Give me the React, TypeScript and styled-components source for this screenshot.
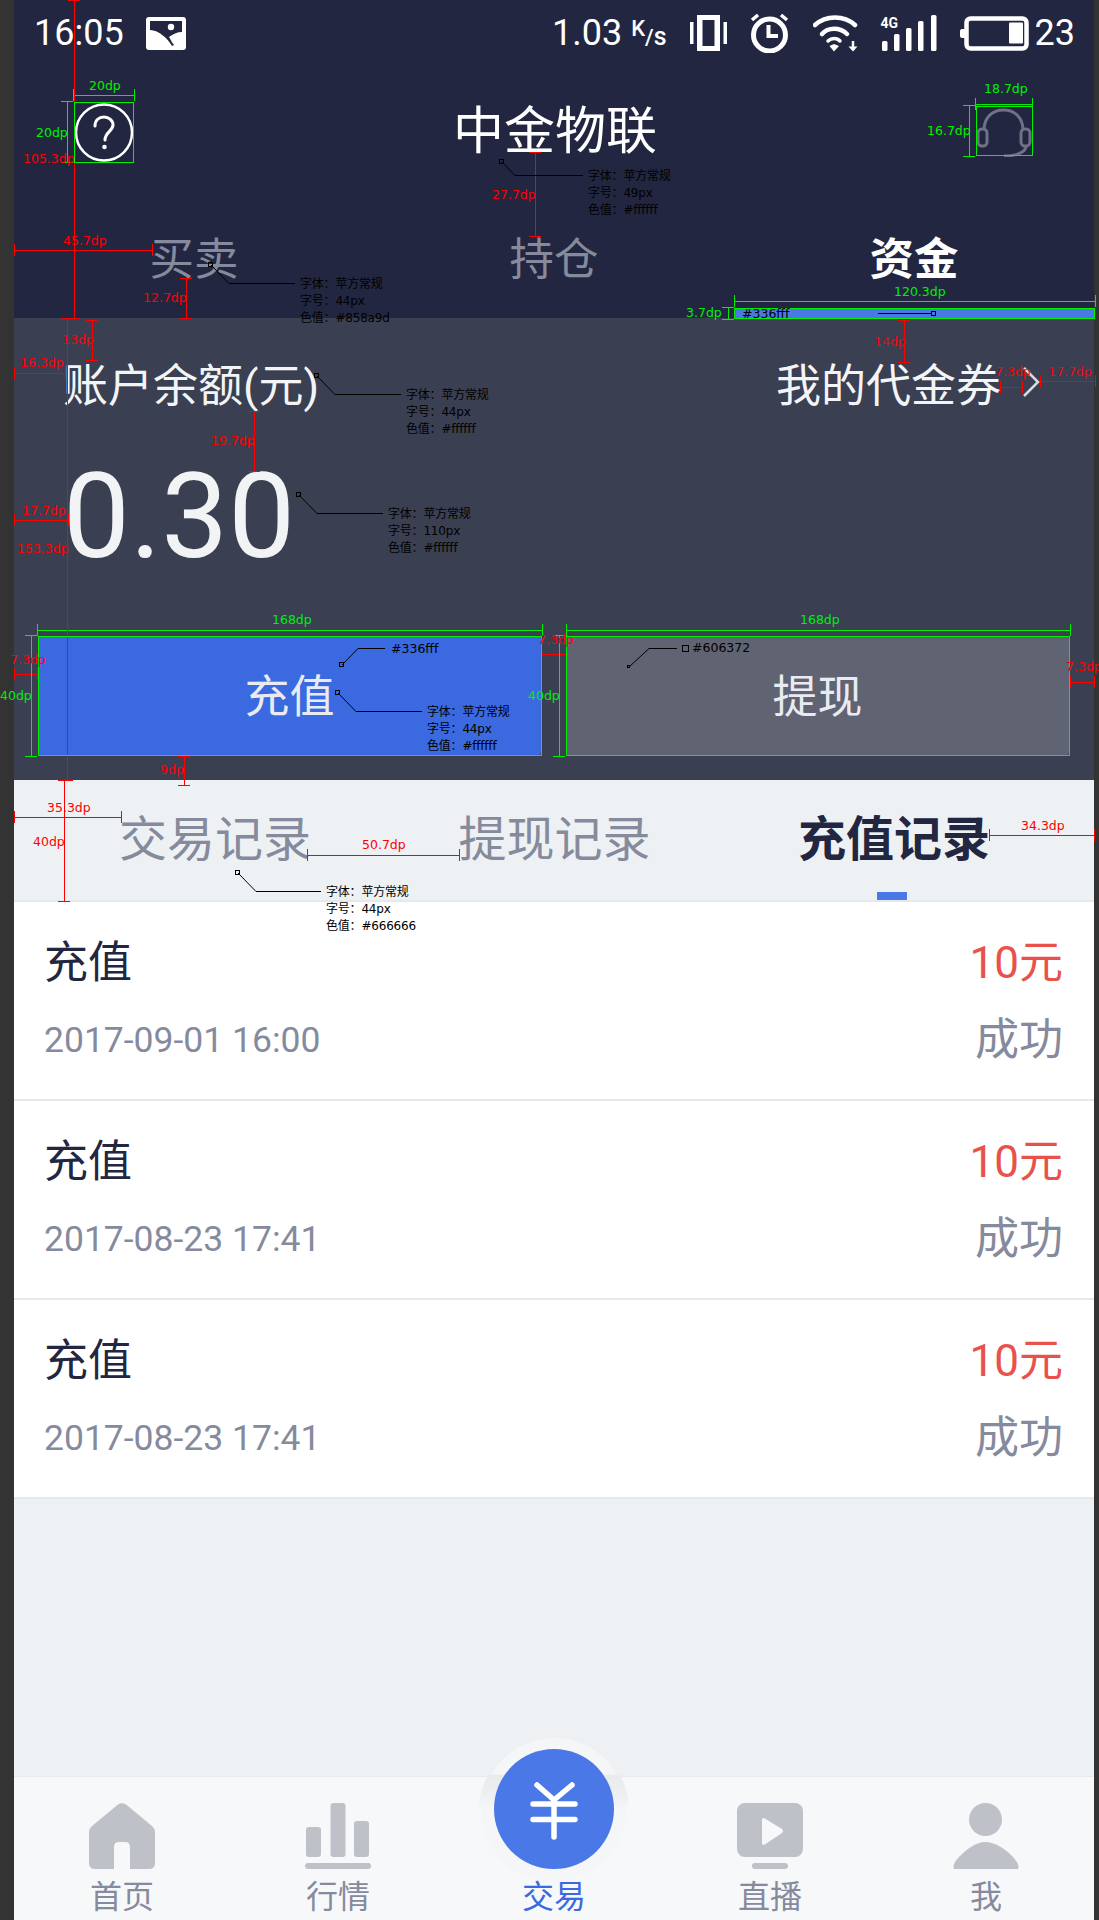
import React from "react";
import styled, { createGlobalStyle } from "styled-components";

const SANS = `Roboto, "Noto Sans CJK SC", sans-serif`;

const GlobalStyle = createGlobalStyle`
  html, body { margin: 0; padding: 0; background: #333333; }
  * { box-sizing: border-box; }
`;

const Page = styled.div`
  position: relative;
  width: 1099px;
  height: 1920px;
  padding: 0 5px 0 14px;
  background: #333333;
  overflow: hidden;
  font-family: ${SANS};
`;

const Screen = styled.div`
  display: flex;
  flex-direction: column;
  height: 1920px;
  background: #eef1f3;
`;

const Header = styled.header`
  display: flex;
  flex-direction: column;
  height: 318px;
  background: #222640;
  color: #ffffff;
`;

const StatusBar = styled.div`
  display: flex;
  align-items: center;
  justify-content: space-between;
  height: 66px;
  padding: 0 19px 0 20px;
  font-size: 36px;
`;

const StatusGroup = styled.div`
  display: flex;
  align-items: center;
  gap: ${(p: { $gap: number }) => p.$gap}px;
`;

const Speed = styled.span`
  display: flex;
  align-items: baseline;
`;

const SpeedUnit = styled.span`
  margin-left: 9px;
  font-size: 22px;
  font-weight: 500;
  white-space: nowrap;
`;

const SpeedK = styled.span`
  vertical-align: 9px;
`;

const SpeedS = styled.span`
  font-size: 25px;
`;

const TitleBar = styled.div`
  display: flex;
  align-items: center;
  justify-content: space-between;
  height: 132px;
  padding: 0 62px 0 60px;
`;

const Title = styled.h1`
  margin: 0;
  font-size: 51px;
  font-weight: 400;
  line-height: 60px;
`;

const TopTabs = styled.nav`
  display: grid;
  grid-template-columns: repeat(3, 1fr);
  height: 120px;
`;

const TopTab = styled.div<{ $active?: boolean }>`
  position: relative;
  padding-top: 36px;
  text-align: center;
  font-size: 44.5px;
  line-height: 52px;
  font-weight: ${(p) => (p.$active ? 700 : 400)};
  color: ${(p) => (p.$active ? "#ffffff" : "#858a9d")};
`;

const TopTabBar = styled.i`
  position: absolute;
  left: 0;
  right: 0;
  bottom: 0;
  height: 10px;
  background: #4a78e6;
`;

const Panel = styled.section`
  height: 462px;
  padding: 34px 25px 25px 24px;
  background: #3a3f52;
  color: #f3f4f6;
`;

const BalanceRow = styled.div`
  display: flex;
  align-items: center;
  justify-content: space-between;
  height: 60px;
  padding: 0 29px 0 25px;
  font-size: 45px;
`;

const VoucherLink = styled.div`
  display: flex;
  align-items: center;
  gap: 21px;
`;

const Amount = styled.div`
  margin: 45px 0 0 25px;
  font-size: 119px;
  line-height: 120px;
  color: #f1f3f5;
`;

const Actions = styled.div`
  display: grid;
  grid-template-columns: 1fr 1fr;
  gap: 25px;
  margin-top: 59px;
`;

const ActionButton = styled.div<{ $tone: string }>`
  display: flex;
  align-items: center;
  justify-content: center;
  height: 119px;
  padding-bottom: 4px;
  border-radius: 3px;
  background: ${(p) => p.$tone};
  color: #e9ebf2;
  font-size: 45px;
`;

const RecordTabs = styled.nav`
  display: flex;
  align-items: flex-start;
  justify-content: space-between;
  height: 122px;
  padding: 32px 104px 0 105px;
  border-bottom: 2px solid #e6e8ea;
  font-size: 48px;
  line-height: 56px;
`;

const RecordTab = styled.div<{ $active?: boolean }>`
  position: relative;
  height: 88px;
  font-weight: ${(p) => (p.$active ? 700 : 400)};
  color: ${(p) => (p.$active ? "#222640" : "#858a9d")};
`;

const RecordTabMark = styled.i`
  position: absolute;
  left: 79px;
  bottom: 0;
  width: 30px;
  height: 8px;
  background: #4a78e6;
`;

const RecordRow = styled.div`
  display: flex;
  justify-content: space-between;
  height: 199px;
  padding: 23px 31px 0 30px;
  background: #ffffff;
  border-bottom: 2px solid #e6e8ea;
`;

const RecordCol = styled.div<{ $end?: boolean }>`
  display: flex;
  flex-direction: column;
  align-items: ${(p) => (p.$end ? "flex-end" : "flex-start")};
`;

const RecordLine = styled.div<{ $color: string; $size: number }>`
  height: 77px;
  line-height: 77px;
  font-size: ${(p) => p.$size}px;
  color: ${(p) => p.$color};
`;

const TabBar = styled.footer`
  position: relative;
  display: grid;
  grid-template-columns: repeat(5, 1fr);
  height: 144px;
  margin-top: auto;
  padding-top: 26px;
  background: #f6f8fa;
  border-top: 1px solid #e8eaec;
`;

const TabItem = styled.div<{ $active?: boolean }>`
  display: flex;
  flex-direction: column;
  align-items: center;
  font-size: 32px;
  line-height: 48px;
  color: ${(p) => (p.$active ? "#3a69e0" : "#858a9d")};
`;

const TabIcon = styled.div`
  height: 66px;
  margin-bottom: 4px;
`;

const TradeHalo = styled.div`
  position: absolute;
  left: 468px;
  top: -39px;
  width: 144px;
  height: 144px;
  border-radius: 50%;
  background: #f4f6f8;
  isolation: isolate;
  &::before {
    content: "";
    position: absolute;
    inset: -3px;
    z-index: -1;
    border-radius: 50%;
    background: linear-gradient(transparent 26%, #e9ebed 27%, #edeff1 40%, transparent 50%);
  }
`;

const TradeCircle = styled.div`
  position: absolute;
  left: 12px;
  top: 11px;
  width: 120px;
  height: 120px;
  border-radius: 50%;
  background: #4a78e6;
`;

/* design annotations drawn over the page */
const Overlay = styled.svg`
  position: absolute;
  left: 0;
  top: 0;
  pointer-events: none;
`;

const Note = styled.span<{ $x: number; $y: number; $color: string }>`
  position: absolute;
  left: ${(p) => p.$x}px;
  top: ${(p) => p.$y - 8}px;
  font: 12.5px/16px "DejaVu Sans", "Noto Sans CJK SC", sans-serif;
  color: ${(p) => p.$color};
  white-space: nowrap;
`;

const SpecNote = styled(Note)`
  font-size: 12px;
  letter-spacing: -0.2px;
`;

const RED = "#ff0000";
const GREEN = "#00f000";
const TICK = 6;

type Dim = [number, number, number];

const redH: Dim[] = [
  [14, 152, 250],
  [14, 65, 373],
  [14, 68, 520],
  [1000, 1022, 387],
  [1040, 1095, 381],
  [14, 37, 674],
  [541, 566, 654],
  [1070, 1094, 682],
  [14, 121, 817],
  [307, 459, 855],
  [989, 1094, 835],
];
const redV: Dim[] = [
  [74, 0, 318],
  [67, 318, 780],
  [186, 278, 318],
  [535, 152, 236],
  [92, 320, 360],
  [904, 320, 362],
  [254, 411, 471],
  [184, 756, 785],
  [64, 780, 901],
];
const greenH: Dim[] = [
  [73, 134, 95],
  [975, 1032, 104],
  [734, 1095, 301],
  [37, 542, 630],
  [566, 1070, 630],
];
const greenV: Dim[] = [
  [67, 101, 162],
  [969, 105, 156],
  [728, 307, 319],
  [31, 635, 756],
  [559, 635, 756],
];
const greenBoxes = [
  [74, 102, 59, 60],
  [976, 106, 56, 49],
  [734, 308, 360, 10],
  [38, 636, 503, 119],
  [566, 636, 503, 119],
];
const leaders = [
  [211, 265, 229, 283, 295],
  [502, 162, 515, 175, 583],
  [317, 376, 335, 394, 401],
  [299, 495, 317, 513, 383],
  [338, 693, 356, 711, 422],
  [342, 665, 358, 648, 385],
  [238, 873, 256, 891, 321],
];

const notes: [number, number, string, string][] = [
  [63, 241, RED, "45.7dp"],
  [23, 159, RED, "105.3dp"],
  [143, 298, RED, "12.7dp"],
  [492, 195, RED, "27.7dp"],
  [62, 340, RED, "13dp"],
  [874, 342, RED, "14dp"],
  [20, 363, RED, "16.3dp"],
  [22, 511, RED, "17.7dp"],
  [211, 441, RED, "19.7dp"],
  [17, 549, RED, "153.3dp"],
  [995, 372, RED, "7.3dp"],
  [1048, 372, RED, "17.7dp"],
  [10, 660, RED, "7.3dp"],
  [538, 640, RED, "7.3dp"],
  [1066, 667, RED, "7.3dp"],
  [160, 770, RED, "9dp"],
  [47, 808, RED, "35.3dp"],
  [33, 842, RED, "40dp"],
  [362, 845, RED, "50.7dp"],
  [1021, 826, RED, "34.3dp"],
  [89, 86, GREEN, "20dp"],
  [36, 133, GREEN, "20dp"],
  [984, 89, GREEN, "18.7dp"],
  [927, 131, GREEN, "16.7dp"],
  [894, 292, GREEN, "120.3dp"],
  [686, 313, GREEN, "3.7dp"],
  [272, 620, GREEN, "168dp"],
  [800, 620, GREEN, "168dp"],
  [0, 696, GREEN, "40dp"],
  [528, 696, GREEN, "40dp"],
  [742, 314, "#000000", "#336fff"],
  [391, 649, "#000000", "#336fff"],
  [692, 648, "#000000", "#606372"],
];

const specs: [number, number, string, string][] = [
  [300, 284, "44px", "#858a9d"],
  [588, 176, "49px", "#ffffff"],
  [406, 395, "44px", "#ffffff"],
  [388, 514, "110px", "#ffffff"],
  [427, 712, "44px", "#ffffff"],
  [326, 892, "44px", "#666666"],
];

const Annotations = () => (
  <>
    <Overlay width={1099} height={1920} fill="none" strokeWidth={1}>
      {[...redH.map((d) => [...d, RED]), ...greenH.map((d) => [...d, GREEN])].map(([a, b, y, c], i) => (
        <path
          key={`h${i}`}
          stroke={c as string}
          d={`M${a} ${+y + 0.5}H${b}M${+a + 0.5} ${+y - TICK}v${TICK * 2}M${+b + 0.5} ${+y - TICK}v${TICK * 2}`}
        />
      ))}
      {[...redV.map((d) => [...d, RED]), ...greenV.map((d) => [...d, GREEN])].map(([x, a, b, c], i) => (
        <path
          key={`v${i}`}
          stroke={c as string}
          d={`M${+x + 0.5} ${a}V${b}M${+x - TICK} ${+a + 0.5}h${TICK * 2}M${+x - TICK} ${+b + 0.5}h${TICK * 2}`}
        />
      ))}
      {greenBoxes.map(([x, y, w, h], i) => (
        <rect key={i} x={x + 0.5} y={y + 0.5} width={w} height={h} stroke={GREEN} />
      ))}
      {leaders.map(([x, y, mx, my, ex], i) => (
        <g key={i} stroke="#000000">
          <rect x={x - 2.5} y={y - 2.5} width={4} height={4} />
          <path d={`M${x} ${y}L${mx} ${my + 0.5}H${ex}`} />
        </g>
      ))}
      <g stroke="#000000">
        <path d="M878 313.5H931" />
        <rect x={931.5} y={311.5} width={4} height={4} />
        <path d="M629 667L649 648.5H677" />
        <rect x={627.5} y={665.5} width={2} height={2} />
        <rect x={682.5} y={645.5} width={6} height={6} />
      </g>
    </Overlay>
    {notes.map(([x, y, c, t], i) => (
      <Note key={i} $x={x} $y={y} $color={c}>
        {t}
      </Note>
    ))}
    {specs.map(([x, y, size, color], i) => (
      <React.Fragment key={i}>
        <SpecNote $x={x} $y={y} $color="#000000">字体：苹方常规</SpecNote>
        <SpecNote $x={x} $y={y + 17} $color="#000000">字号：{size}</SpecNote>
        <SpecNote $x={x} $y={y + 34} $color="#000000">色值：{color}</SpecNote>
      </React.Fragment>
    ))}
  </>
);

const PhotoIcon = () => (
  <svg width="40" height="33" viewBox="0 0 40 33">
    <rect width="40" height="33" rx="3" fill="#fff" />
    <path d="M4 4H36V15C31 15 27 17 23 20C25 23 26 26 28 28L26 29C22 22 13 13 4 13Z" fill="#222640" />
    <circle cx="25" cy="10" r="3.2" fill="#fff" />
  </svg>
);

const VibrateIcon = () => (
  <svg width="37" height="36" viewBox="0 0 37 36" fill="#fff">
    <rect x="0" y="7" width="3.5" height="22" />
    <rect x="33.5" y="7" width="3.5" height="22" />
    <path fillRule="evenodd" d="M7 0H30V36H7ZM12.5 5V31H24.5V5Z" />
  </svg>
);

const AlarmIcon = () => (
  <svg width="40" height="39" viewBox="0 0 40 39" fill="none" stroke="#fff">
    <circle cx="19.5" cy="21" r="16" strokeWidth="5" />
    <path d="M18.5 11V22H28" strokeWidth="4" />
    <path d="M2 6L8 1M37 6L31 1" strokeWidth="3.5" />
  </svg>
);

const WifiIcon = () => (
  <svg width="45" height="37" viewBox="0 0 45 37" fill="none" stroke="#fff" strokeWidth="4.5" strokeLinecap="round">
    <path d="M2 10C13 0 31 0 42 10" />
    <path d="M9 19C15 12 27 12 34 19" />
    <path d="M15 26C18.500 22.500 24 22.500 27 26" strokeWidth="3.5" />
    <path d="M16.500 31L21 29L26 31L21 36.500Z" fill="#fff" stroke="none" />
    <path d="M40 26V33" strokeWidth="2.500" strokeLinecap="butt" />
    <path d="M35.500 31.500H44.500L40 36.500Z" fill="#fff" stroke="none" />
  </svg>
);

const SignalWrap = styled.div`
  position: relative;
  width: 56px;
  height: 36px;
`;

const NetLabel = styled.span`
  position: absolute;
  left: 0;
  top: 0;
  font-size: 14px;
  line-height: 16px;
  font-weight: 700;
  color: #ffffff;
`;

const SignalIcon = () => (
  <SignalWrap>
    <NetLabel>4G</NetLabel>
    <svg width="56" height="36" viewBox="0 0 56 36" fill="#fff">
      <rect x="1" y="26" width="5.500" height="10" rx="1.500" />
      <rect x="13" y="19" width="5.500" height="17" rx="1.500" />
      <rect x="25" y="13" width="5.500" height="23" rx="1.500" />
      <rect x="37" y="6" width="5.500" height="30" rx="1.500" />
      <rect x="50" y="0" width="5.500" height="36" rx="1.500" />
    </svg>
  </SignalWrap>
);

const BatteryIcon = () => (
  <svg width="69" height="35" viewBox="0 0 69 35">
    <rect x="0" y="13" width="6" height="9" rx="2" fill="#fff" />
    <rect x="6.500" y="2.500" width="60" height="30" rx="4" fill="none" stroke="#fff" strokeWidth="4.500" />
    <rect x="49" y="6.500" width="14" height="21" rx="1" fill="#fff" />
  </svg>
);

const HelpIcon = () => (
  <svg width="60" height="60" viewBox="0 0 60 60" fill="none" stroke="#fff" strokeLinecap="round">
    <circle cx="30" cy="30.500" r="28" strokeWidth="2.500" />
    <path d="M21 24C21 18 25 15 30 15C35 15 39 18.500 39 23C39 29 31 30 31 38" strokeWidth="3" />
    <circle cx="30.500" cy="45" r="2.300" fill="#fff" stroke="none" />
  </svg>
);

const HeadsetIcon = () => (
  <svg width="56" height="49" viewBox="0 0 56 49" fill="none" stroke="#6d7285" strokeWidth="3">
    <path d="M8 22C8 10 16 2 27.500 2C39 2 47 10 47 22" />
    <rect x="2" y="21" width="9" height="17" rx="4" />
    <rect x="45" y="21" width="9" height="17" rx="4" />
    <path d="M50 38C50 43 43 48 28 48" />
  </svg>
);

const Chevron = () => (
  <svg width="18" height="30" viewBox="0 0 18 30" fill="none" stroke="#d8dae0" strokeWidth="2.500">
    <path d="M2 1L16 15L2 29" />
  </svg>
);

const HomeIcon = () => (
  <svg width="66" height="66" viewBox="0 0 66 66" fill="#bec2c8">
    <path d="M29 1.500Q33 -1 37 1.500L63 23Q66 25.500 66 29V60Q66 66 60 66H41V44Q41 39 36 39H30Q25 39 25 44V66H6Q0 66 0 60V29Q0 25.500 3 23Z" />
  </svg>
);

const MarketIcon = () => (
  <svg width="66" height="66" viewBox="0 0 66 66" fill="#bec2c8">
    <rect x="1" y="24" width="15" height="30" rx="3" />
    <rect x="25.500" y="0" width="15" height="54" rx="3" />
    <rect x="49" y="18" width="15" height="36" rx="3" />
    <rect x="0" y="60" width="66" height="6" rx="3" />
  </svg>
);

const LiveIcon = () => (
  <svg width="66" height="66" viewBox="0 0 66 66" fill="#bec2c8">
    <rect width="66" height="54" rx="8" />
    <rect x="15" y="60" width="36" height="6" rx="3" />
    <path d="M27 15L45 26Q47 28 45 30L27 42Q25 42 25 40V17Q25 15 27 15Z" fill="#f6f8fa" />
  </svg>
);

const MeIcon = () => (
  <svg width="66" height="66" viewBox="0 0 66 66" fill="#bec2c8">
    <ellipse cx="32.500" cy="16.500" rx="16.500" ry="16.500" />
    <path d="M1 66C-1 62 3 57 8 52C15 45 24 39 32 39C42 39 52 46 58 52C63 57 67 62 65 66Z" />
  </svg>
);

const YenIcon = () => (
  <svg width="120" height="120" viewBox="0 0 120 120" fill="none" stroke="#fff" strokeWidth="5.500" strokeLinecap="round">
    <path d="M43 36L60 51L78 36M60 51V88M39 55H81M39 70.500H81" />
  </svg>
);

const RECORDS = ["2017-09-01 16:00", "2017-08-23 17:41", "2017-08-23 17:41"];

export default function App() {
  return (
    <Page>
      <GlobalStyle />
      <Screen>
        <Header>
          <StatusBar>
            <StatusGroup $gap={22}>
              <span>16:05</span>
              <PhotoIcon />
            </StatusGroup>
            <StatusGroup $gap={23}>
              <Speed>
                1.03
                <SpeedUnit>
                  <SpeedK>K</SpeedK>/<SpeedS>s</SpeedS>
                </SpeedUnit>
              </Speed>
              <VibrateIcon />
              <AlarmIcon />
              <WifiIcon />
              <SignalIcon />
              <StatusGroup $gap={6}>
                <BatteryIcon />
                <span>23</span>
              </StatusGroup>
            </StatusGroup>
          </StatusBar>
          <TitleBar>
            <HelpIcon />
            <Title>中金物联</Title>
            <HeadsetIcon />
          </TitleBar>
          <TopTabs>
            <TopTab>买卖</TopTab>
            <TopTab>持仓</TopTab>
            <TopTab $active>
              资金
              <TopTabBar />
            </TopTab>
          </TopTabs>
        </Header>
        <Panel>
          <BalanceRow>
            <span>账户余额(元)</span>
            <VoucherLink>
              我的代金券
              <Chevron />
            </VoucherLink>
          </BalanceRow>
          <Amount>0.30</Amount>
          <Actions>
            <ActionButton $tone="#3a69e0">充值</ActionButton>
            <ActionButton $tone="#606372">提现</ActionButton>
          </Actions>
        </Panel>
        <RecordTabs>
          <RecordTab>交易记录</RecordTab>
          <RecordTab>提现记录</RecordTab>
          <RecordTab $active>
            充值记录
            <RecordTabMark />
          </RecordTab>
        </RecordTabs>
        {RECORDS.map((date, i) => (
          <RecordRow key={i}>
            <RecordCol>
              <RecordLine $color="#222640" $size={44}>充值</RecordLine>
              <RecordLine $color="#858a9d" $size={35.5}>{date}</RecordLine>
            </RecordCol>
            <RecordCol $end>
              <RecordLine $color="#e8524a" $size={44}>10元</RecordLine>
              <RecordLine $color="#858a9d" $size={44}>成功</RecordLine>
            </RecordCol>
          </RecordRow>
        ))}
        <TabBar>
          <TabItem>
            <TabIcon><HomeIcon /></TabIcon>
            首页
          </TabItem>
          <TabItem>
            <TabIcon><MarketIcon /></TabIcon>
            行情
          </TabItem>
          <TabItem $active>
            <TabIcon />
            交易
          </TabItem>
          <TabItem>
            <TabIcon><LiveIcon /></TabIcon>
            直播
          </TabItem>
          <TabItem>
            <TabIcon><MeIcon /></TabIcon>
            我
          </TabItem>
          <TradeHalo>
            <TradeCircle>
              <YenIcon />
            </TradeCircle>
          </TradeHalo>
        </TabBar>
      </Screen>
      <Annotations />
    </Page>
  );
}
